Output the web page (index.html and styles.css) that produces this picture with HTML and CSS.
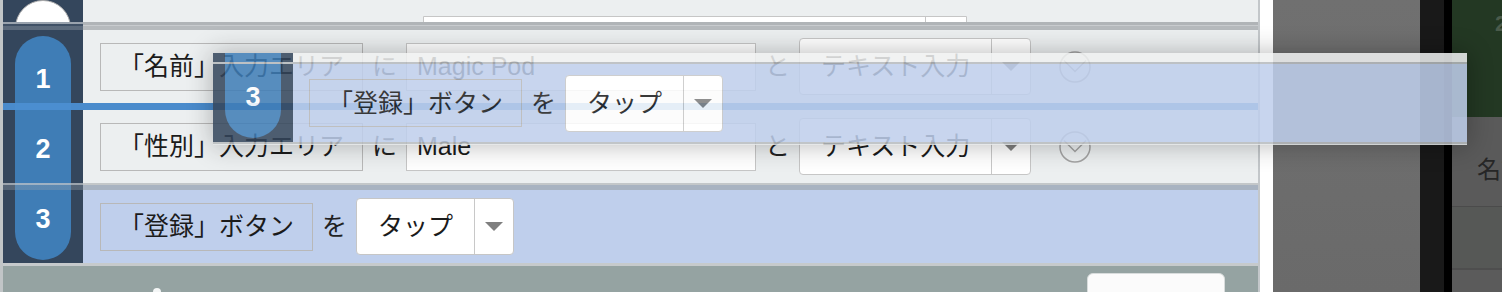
FILE: index.html
```html
<!DOCTYPE html>
<html lang="ja">
<head>
<meta charset="utf-8">
<title>Steps</title>
<link rel="stylesheet" href="styles.css">
</head>
<body>
<div class="screen">
  <div class="editor">
    <div class="steps">
      <div class="pill"><span>1</span><span>2</span><span>3</span></div>

      <div class="row row-top">
        <div class="side"><div class="dot"></div></div>
        <div class="main"><div class="combo-top"><span class="ct-left"></span><span class="ct-right"></span></div></div>
      </div>

      <div class="sep sep-a"><div class="s-side"></div><div class="s-main"></div></div>

      <div class="row">
        <div class="side"></div>
        <div class="main">
          <div class="target">「名前」入力エリア</div>
          <span class="particle">に</span>
          <div class="input">Magic Pod</div>
          <span class="particle">と</span>
          <div class="select"><span class="label">テキスト入力</span><span class="caret"></span></div>
          <svg class="toggle" viewBox="0 0 32 32"><circle cx="16" cy="16" r="15" fill="none" stroke="#a3a3a3" stroke-width="1.5"/><polyline points="5,9.5 16,20.5 27,9.5" fill="none" stroke="#a3a3a3" stroke-width="1.5"/></svg>
        </div>
      </div>

      <div class="dropline"></div>

      <div class="row">
        <div class="side"></div>
        <div class="main">
          <div class="target">「性別」入力エリア</div>
          <span class="particle">に</span>
          <div class="input">Male</div>
          <span class="particle">と</span>
          <div class="select"><span class="label">テキスト入力</span><span class="caret"></span></div>
          <svg class="toggle" viewBox="0 0 32 32"><circle cx="16" cy="16" r="15" fill="none" stroke="#a3a3a3" stroke-width="1.5"/><polyline points="5,9.5 16,20.5 27,9.5" fill="none" stroke="#a3a3a3" stroke-width="1.5"/></svg>
        </div>
      </div>

      <div class="sep sep-b"><div class="s-side"></div><div class="s-main"></div></div>

      <div class="row selected">
        <div class="side"></div>
        <div class="main">
          <div class="target">「登録」ボタン</div>
          <span class="particle">を</span>
          <div class="select"><span class="label">タップ</span><span class="caret"></span></div>
        </div>
      </div>

      <div class="sep-end"></div>
    </div>
    <div class="footer"><span class="fdot"></span><div class="fbtn"></div></div>
  </div>
  <div class="gutter"></div>
  <div class="panel-gray"></div>
  <div class="strip-dark"></div>
  <div class="strip-black"></div>
  <div class="panel-right">
    <div class="pr-green">2</div>
    <div class="pr-name">名前</div>
    <div class="pr-row"></div>
  </div>
</div>

<div class="ghost">
  <div class="g-pill"><span>3</span></div>
  <div class="g-top"><div class="g-side"></div><div class="g-strip"></div></div>
  <div class="g-line"></div>
  <div class="g-body">
    <div class="g-side"></div>
    <div class="g-main">
      <div class="target">「登録」ボタン</div>
      <span class="particle">を</span>
      <div class="select"><span class="label">タップ</span><span class="caret"></span></div>
    </div>
  </div>
  <div class="g-bottom"></div>
</div>
</body>
</html>
```

FILE: styles.css
```css
* { box-sizing: border-box; }
html, body { margin: 0; padding: 0; }
body {
  width: 1502px;
  height: 292px;
  overflow: hidden;
  position: relative;
  background: #6d6d6d;
  font-family: "Liberation Sans", "Noto Sans CJK JP", sans-serif;
  color: #1b1b1b;
}
.screen { display: flex; height: 292px; }

/* editor column */
.editor {
  width: 1260px;
  flex: none;
  border-left: 3px solid #c1c5c7;
  border-right: 2px solid #c3c7ca;
  display: flex;
  flex-direction: column;
  background: #95a3a2;
}
.steps { position: relative; background: #34465c; }

.pill {
  position: absolute;
  left: 12px;
  top: 36px;
  width: 56px;
  height: 224px;
  border-radius: 28px;
  background: #3f7db6;
  display: flex;
  flex-direction: column;
  justify-content: space-between;
  align-items: center;
  padding: 29px 0 27px;
}
.pill span, .g-pill span {
  color: #fff;
  font-weight: bold;
  font-size: 27px;
  line-height: 28px;
  height: 28px;
}

.row { display: grid; grid-template-columns: 80px 1fr; height: 73px; }
.row .main {
  display: flex;
  align-items: center;
  gap: 9px;
  padding-left: 17px;
  background: #eceff0;
}
.row.selected .main { background: #bfcfec; }

.row-top { height: 22px; overflow: hidden; }
.row-top .side { display: flex; align-items: flex-end; justify-content: center; }
.dot {
  flex: none;
  width: 56px;
  height: 56px;
  border-radius: 50%;
  background: #fff;
  border: 1.5px solid #a9a9a9;
  margin-bottom: 12px;
}
.row-top .main { align-items: flex-end; }
.combo-top {
  flex: none;
  display: flex;
  height: 40px;
  margin: 0 0 12px 323px;
  background: #fff;
  border: 1px solid #c6c6c6;
  border-radius: 0 0 4px 4px;
}
.ct-left { width: 502px; border-right: 1px solid #c6c6c6; }
.ct-right { width: 40px; }

/* separators */
.sep { display: grid; grid-template-columns: 80px 1fr; position: relative; z-index: 1; }
.sep-a { height: 8px; }
.sep-a .s-side { background: linear-gradient(rgba(255,255,255,.5) 0 2px, rgba(255,255,255,.06) 2px 4px, rgba(255,255,255,.2) 4px); }
.sep-a .s-main { background: linear-gradient(#b0b4b7 0 3px, #c8cbce 3px 4px, #b6babd 4px); }
.sep-b { height: 7px; }
.sep-b .s-side { background: linear-gradient(rgba(190,195,200,.75) 0 2px, rgba(150,160,170,.35) 2px); }
.sep-b .s-main { background: linear-gradient(#c3c7c9 0 2px, #a8b3c1 2px); }
.dropline { height: 7px; background: rgba(76,143,210,.95); position: relative; z-index: 1; }
.sep-end { height: 3px; background: #c6cacc; position: relative; z-index: 1; }

/* step widgets */
.target {
  flex: none;
  height: 48px;
  padding: 0 18px;
  border: 1px solid #b8b8b8;
  display: flex;
  align-items: center;
  font-size: 25px;
  line-height: 1;
  white-space: nowrap;
}
.particle {
  flex: none;
  width: 25px;
  font-size: 25px;
  line-height: 1;
  text-align: center;
  color: #222;
}
.input {
  flex: none;
  width: 350px;
  height: 48px;
  border: 1px solid #c6c6c6;
  background: #fff;
  padding-left: 10px;
  display: flex;
  align-items: center;
  font-size: 25px;
  white-space: nowrap;
}
.select {
  flex: none;
  display: flex;
  height: 57px;
  background: #fff;
  border: 1px solid #c6c6c6;
  border-radius: 4px;
}
.select .label {
  display: flex;
  align-items: center;
  padding: 0 21px;
  font-size: 25px;
  line-height: 1;
  white-space: nowrap;
}
.select .caret {
  width: 39px;
  border-left: 1px solid #c8c8c8;
  display: flex;
  align-items: center;
  justify-content: center;
}
.select .caret::after {
  content: "";
  border-left: 9px solid transparent;
  border-right: 9px solid transparent;
  border-top: 9px solid #7f7f7f;
}
.toggle { flex: none; width: 32px; height: 32px; margin-left: 19px; }

/* footer */
.footer { flex: 1; display: flex; align-items: flex-start; background: #95a3a2; overflow: hidden; }
.fdot { flex: none; width: 8px; height: 8px; border-radius: 50%; background: #f4f6f6; margin: 22px 0 0 150px; }
.fbtn { flex: none; width: 138px; height: 40px; margin: 7px 0 0 926px; background: #fbfbfb; border: 1px solid #d8dcdc; border-radius: 6px; }

/* right side */
.gutter { width: 13px; flex: none; background: #fff; }
.panel-gray { width: 147px; flex: none; background: linear-gradient(#707070, #6a6a6a); }
.strip-dark { width: 24px; flex: none; background: #191919; }
.strip-black { width: 8px; flex: none; background: #000; }
.panel-right { width: 50px; flex: none; display: flex; flex-direction: column; background: #5b5b5b; overflow: hidden; }
.pr-green { height: 117px; flex: none; background: #233823; color: #4b5b4b; font-size: 22px; font-weight: bold; line-height: 22px; padding: 13px 0 0 43px; }
.pr-name { height: 90px; flex: none; background: #5a5a5a; border-bottom: 1px solid #4b4b4b; padding: 12px 0 0 25px; display: flex; align-items: center; font-size: 24px; color: #262626; white-space: nowrap; }
.pr-row { height: 63px; flex: none; background: #565856; border-bottom: 2px solid #4e4e4e; }

/* drag ghost */
.ghost {
  position: absolute;
  left: 213px;
  top: 53px;
  width: 1254px;
  height: 92px;
  opacity: .86;
  box-shadow: 0 0 24px rgba(0,0,0,.32);
  display: flex;
  flex-direction: column;
  z-index: 5;
}
.g-pill {
  position: absolute;
  left: 12px;
  top: 0;
  width: 56px;
  height: 85px;
  border-radius: 0 0 28px 28px;
  background: #3f7db6;
  display: flex;
  justify-content: center;
  padding-top: 30px;
}
.g-top { display: grid; grid-template-columns: 80px 1fr; height: 9px; }
.g-side { background: #34465c; }
.g-strip { background: #eff1f1; }
.g-line { height: 2px; background: #b6babd; position: relative; z-index: 1; }
.g-body { display: grid; grid-template-columns: 80px 1fr; height: 78px; }
.g-main { display: flex; align-items: center; gap: 9px; padding-left: 16px; background: #bfcfec; }
.g-bottom { height: 3px; background: linear-gradient(#b8bcbf 0 2px, #e2e5e6 2px); }
```
